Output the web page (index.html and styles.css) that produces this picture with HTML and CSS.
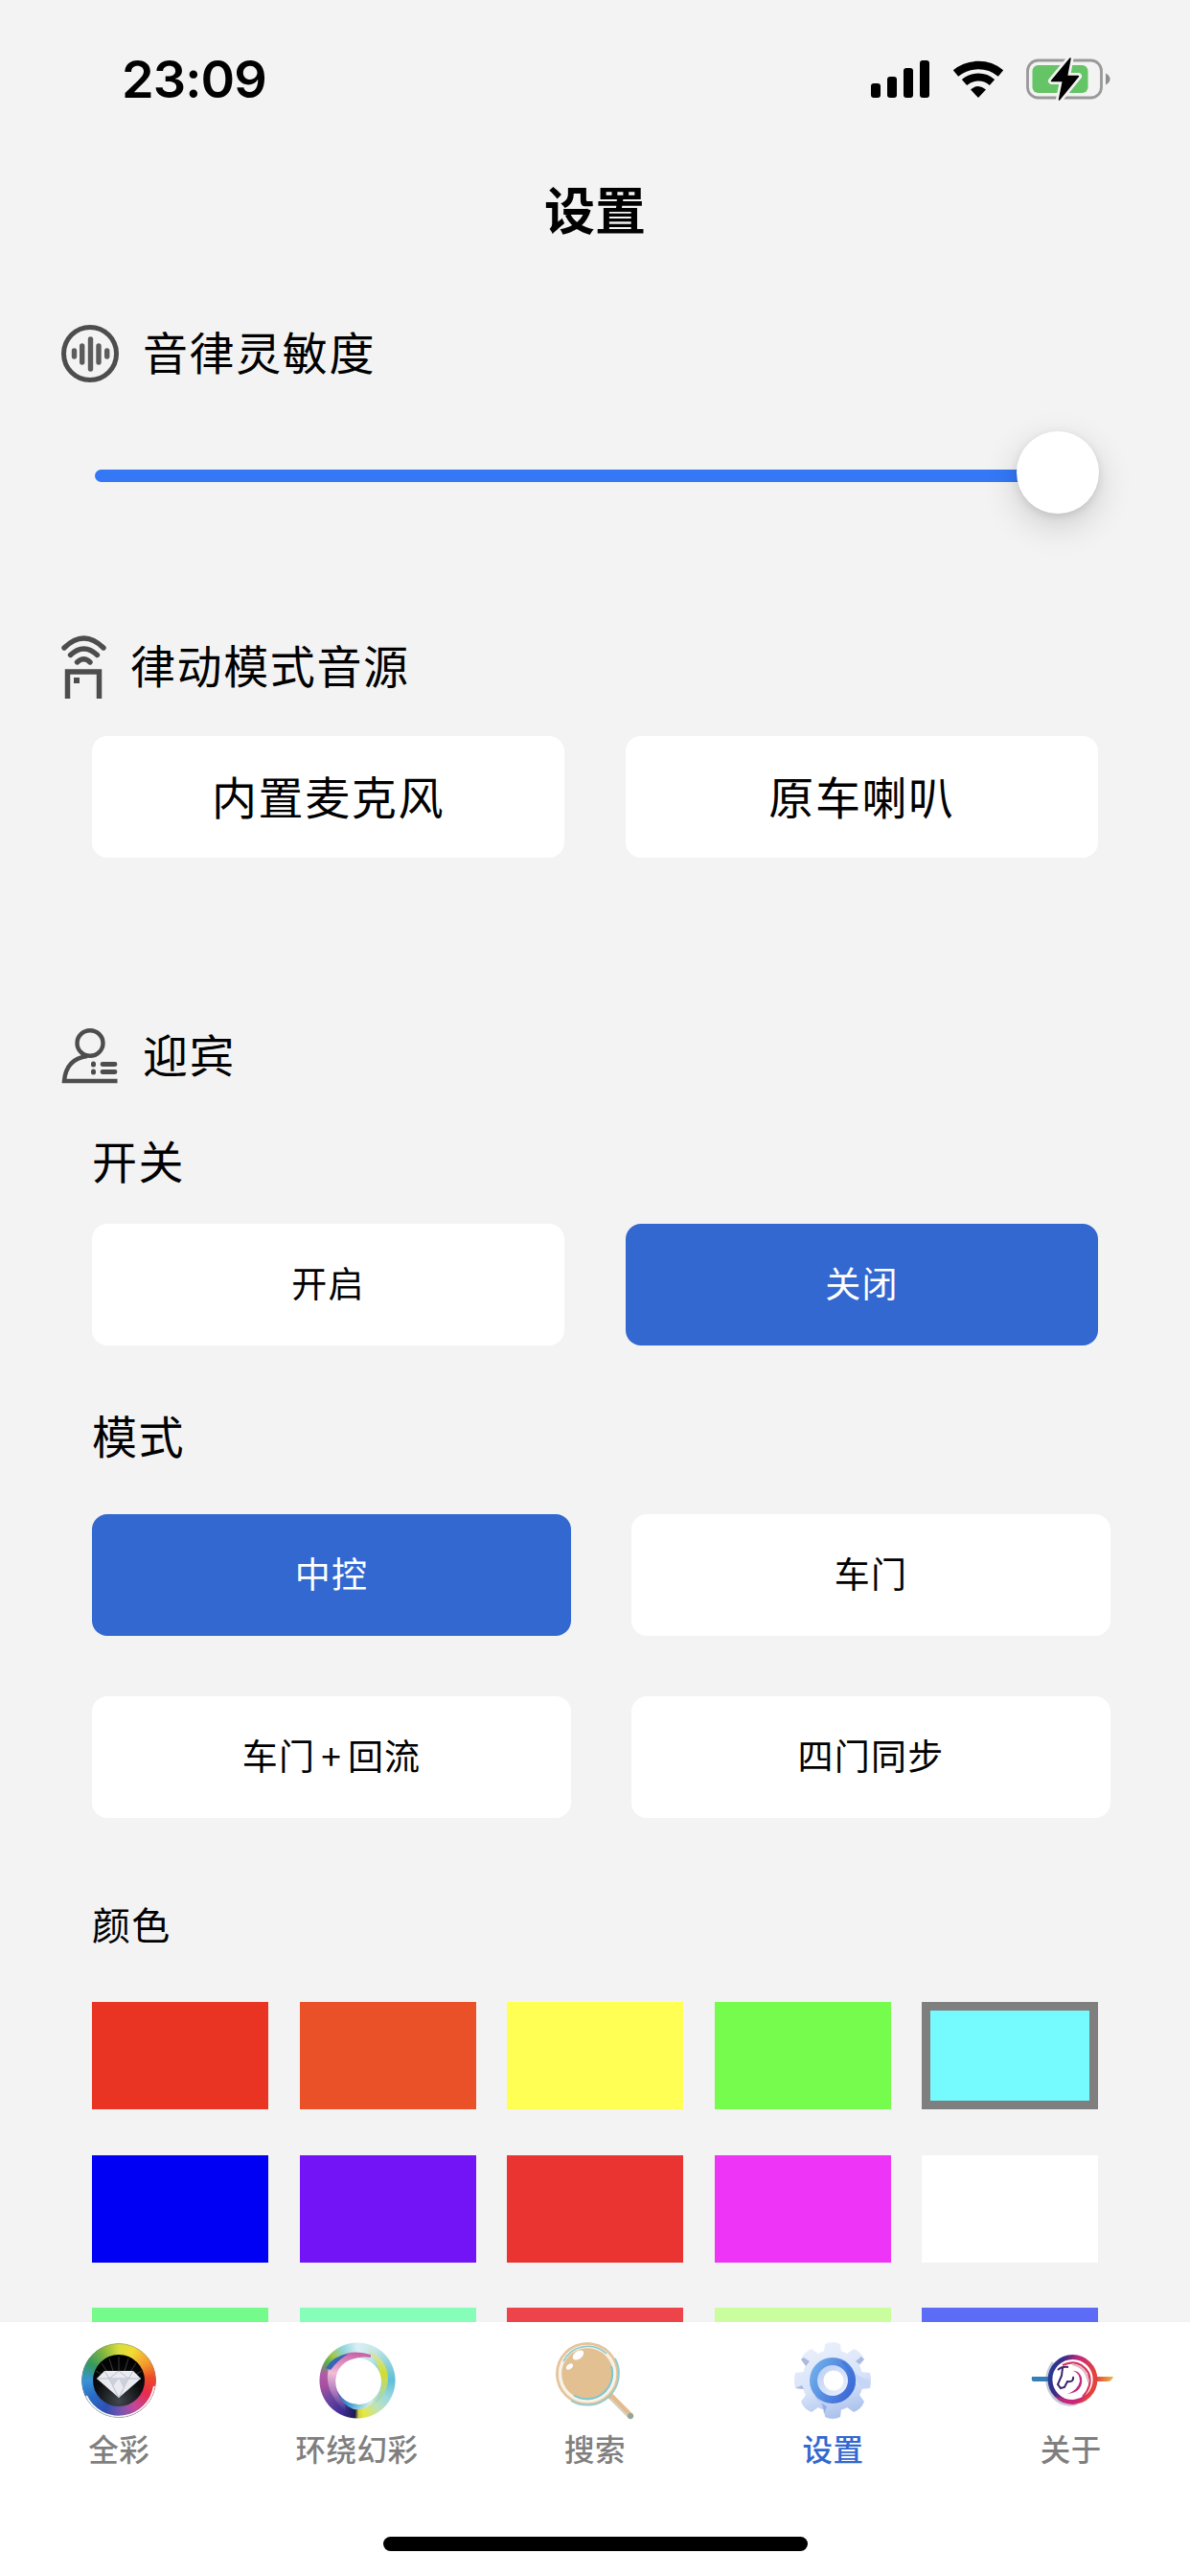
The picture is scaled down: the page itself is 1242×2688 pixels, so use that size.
FILE: index.html
```html
<!DOCTYPE html>
<html lang="zh-CN">
<head>
    <meta charset="UTF-8">
    <meta name="viewport" content="width=device-width, initial-scale=1.0">
    <title>设置</title>
    <link rel="stylesheet" href="styles.css">
</head>
<body>
    <div class="app">
        <div class="status-bar">
            <span class="time">23:09</span>
            <svg class="status-icons" width="252" height="46" viewBox="0 0 252 46">
                <!-- signal -->
                <rect x="1" y="27" width="10" height="15" rx="3"/>
                <rect x="18" y="20" width="10" height="22" rx="3"/>
                <rect x="35" y="11" width="10" height="31" rx="3"/>
                <rect x="52" y="3" width="10" height="39" rx="3"/>
                <!-- wifi -->
                <path d="M89.500 16.500A37 37 0 0 1 136.500 16.500" fill="none" stroke="#000" stroke-width="8.500"/>
                <path d="M98.500 26A22 22 0 0 1 127.500 26" fill="none" stroke="#000" stroke-width="8"/>
                <path d="M105 33.500Q113 26.500 121 33.500L113 42Z"/>
                <!-- battery -->
                <rect x="164.500" y="3" width="77" height="39" rx="11" fill="none" stroke="#999" stroke-width="2.800"/>
                <path d="M246 16.500Q250.500 19 250.500 22.500T246 28.500Z" fill="#8e8e8e"/>
                <rect x="169.500" y="8" width="58" height="29" rx="6" fill="#65c466"/>
                <path d="M209 1L189.500 24.500H201.500L197.500 44L217.500 19.500H205.500Z" stroke="#f3f3f3" stroke-width="7" stroke-linejoin="round"/>
                <path d="M209 1L189.500 24.500H201.500L197.500 44L217.500 19.500H205.500Z" stroke="#000" stroke-width="1.500" stroke-linejoin="round"/>
            </svg>
        </div>

        <h1>设置</h1>

        <main>
            <section class="sensitivity">
                <div class="section-head">
                    <svg width="60" height="60" viewBox="0 0 60 60" fill="none" stroke="#4d4d4d" stroke-linecap="round">
                        <circle cx="30" cy="30" r="27.500" stroke-width="5"/>
                        <path d="M13.500 27V33M21.700 22V39M30.500 15V46M39 22V39M47.700 27V33" stroke="#5c5c5c" stroke-width="5.400"/>
                    </svg>
                    <h2>音律灵敏度</h2>
                </div>
                <div class="slider">
                    <div class="track"></div>
                    <div class="thumb"></div>
                </div>
            </section>

            <section class="source">
                <div class="section-head">
                    <svg width="47" height="66" viewBox="0 0 47 66" fill="none" stroke="#4d4d4d">
                        <path d="M3 13Q23.500 -7 44 13" stroke-width="5.400" stroke-linecap="round"/>
                        <path d="M9.500 20.500Q23.500 7.500 37.500 20.500" stroke-width="5.400" stroke-linecap="round"/>
                        <path d="M16.500 28Q23.500 21.500 30 28" stroke-width="5.400" stroke-linecap="round"/>
                        <path d="M6.500 66V38H39.500V66" stroke-width="5.500"/>
                        <rect x="13" y="44" width="6" height="6" fill="#4d4d4d" stroke="none"/>
                    </svg>
                    <h2>律动模式音源</h2>
                </div>
                <div class="options large">
                    <button type="button">内置麦克风</button>
                    <button type="button">原车喇叭</button>
                </div>
            </section>

            <section class="welcome">
                <div class="section-head">
                    <svg width="60" height="58" viewBox="0 0 60 58" fill="none" stroke="#4d4d4d" stroke-width="4.400">
                        <ellipse cx="30" cy="15.500" rx="13.500" ry="13.300"/>
                        <path d="M27 29Q5 32 3 55H58.500"/>
                        <path d="M33.500 37V38M33.500 45V46" stroke-width="5" stroke-linecap="round"/>
                        <path d="M43 37.500H56M43 45.500H56" stroke-width="4.800" stroke-linecap="round"/>
                    </svg>
                    <h2>迎宾</h2>
                </div>

                <h3>开关</h3>
                <div class="options">
                    <button type="button">开启</button>
                    <button type="button" class="active">关闭</button>
                </div>

                <h3 class="mode-title">模式</h3>
                <div class="options modes">
                    <button type="button" class="active">中控</button>
                    <button type="button">车门<span class="plus">+</span>回流</button>
                    <button type="button">车门</button>
                    <button type="button">四门同步</button>
                </div>

                <h3 class="color-title">颜色</h3>
                <div class="colors">
                    <div class="swatch red"></div>
                    <div class="swatch orange"></div>
                    <div class="swatch yellow"></div>
                    <div class="swatch green"></div>
                    <div class="swatch cyan selected"></div>
                    <div class="swatch blue"></div>
                    <div class="swatch purple"></div>
                    <div class="swatch scarlet"></div>
                    <div class="swatch magenta"></div>
                    <div class="swatch white"></div>
                    <div class="swatch mint"></div>
                    <div class="swatch aqua"></div>
                    <div class="swatch rose"></div>
                    <div class="swatch lime"></div>
                    <div class="swatch indigo"></div>
                </div>
            </section>
        </main>

        <nav>
            <div class="tabs">
                <a class="tab">
                    <span class="icon icon-rainbow">
                        <svg width="84" height="84" viewBox="0 0 84 84">
                            <defs>
                                <radialGradient id="dark" cx=".5" cy=".9" r=".8">
                                    <stop offset="0" stop-color="#41474c"/>
                                    <stop offset=".6" stop-color="#0c0d0f"/>
                                    <stop offset="1" stop-color="#000"/>
                                </radialGradient>
                            </defs>
                            <path d="M8 58A37.500 37.500 0 0 0 79 48" fill="none" stroke="#fff" stroke-width="2"/>
                            <circle cx="42" cy="42" r="38.500" fill="none" stroke="#888" stroke-opacity=".5"/>
                            <circle cx="42" cy="42" r="27" fill="url(#dark)"/>
                            <path d="M42 32V17M36 32L32 19M48 32L52 19M30 33L24 24M54 33L60 24M26 37L18 32M58 37L66 32" stroke="#3b3b3b" stroke-width="1"/>
                            <path d="M27 32H57L65 40L42 60L19 40Z" fill="#e9ebf1"/>
                            <path d="M19 40H65M27 32L32 40L42 32L52 40L57 32M32 40L42 60L52 40" fill="none" stroke="#b9bdc9" stroke-width="1"/>
                            <path d="M32 40L36 48L42 40L47 50L52 40Z" fill="#cdd0da"/>
                        </svg>
                    </span>
                    <span>全彩</span>
                </a>
                <a class="tab">
                    <span class="icon icon-ring">
                        <svg width="84" height="84" viewBox="0 0 84 84">
                            <defs>
                                <linearGradient id="ringPink" x1=".6" y1="0" x2=".5" y2="1">
                                    <stop offset="0" stop-color="#c95fa5"/>
                                    <stop offset=".4" stop-color="#f3bbd9"/>
                                    <stop offset=".75" stop-color="#a070b8"/>
                                    <stop offset="1" stop-color="#40308f"/>
                                </linearGradient>
                                <linearGradient id="ringYellow" x1="0" y1="0" x2="0" y2="1">
                                    <stop offset="0" stop-color="#cfe8d8"/>
                                    <stop offset=".45" stop-color="#d3dc30"/>
                                    <stop offset="1" stop-color="#9dd6cf"/>
                                </linearGradient>
                                <linearGradient id="ringBlue" x1="0" y1="0" x2="1" y2=".3">
                                    <stop offset="0" stop-color="#3a56ae"/>
                                    <stop offset=".5" stop-color="#3aa0d0"/>
                                    <stop offset="1" stop-color="#d4edf2"/>
                                </linearGradient>
                            </defs>
                            <path d="M50 8Q73 18 74 40Q73 58 60 66Q70 50 66 38Q64 20 50 8Z" fill="url(#ringYellow)"/>
                            <path d="M56 15Q26 6 12 29Q6 52 29 74Q32 68 23 58Q14 42 24 29Q36 15 56 18Z" fill="url(#ringPink)"/>
                            <path d="M9 29Q17 16 33 14Q22 20 14 31Z" fill="#3566b8"/>
                            <path d="M21 54Q30 67 44 67.500L60 62Q52 74 38 72Q25 67 21 54Z" fill="url(#ringBlue)"/>
                            <circle cx="43" cy="43" r="24" fill="#fff"/>
                        </svg>
                    </span>
                    <span>环绕幻彩</span>
                </a>
                <a class="tab">
                    <span class="icon">
                        <svg width="84" height="84" viewBox="0 0 84 84" fill="none">
                            <path d="M57 57L79 79" stroke="#e6bb8c" stroke-width="6.500" stroke-linecap="round"/>
                            <path d="M58 61L76 79" stroke="#c8dcd5" stroke-width="1.500"/>
                            <circle cx="79" cy="79" r="3" fill="#8ca8a0"/>
                            <circle cx="34" cy="35" r="33" fill="#e6c39a"/>
                            <path d="M63 19A33 33 0 0 1 17 63" stroke="#8fcbd0" stroke-width="1.800"/>
                            <circle cx="34" cy="35" r="28.500" stroke="#f7f2e8" stroke-width="3.500"/>
                            <circle cx="34" cy="35" r="26.500" fill="#e2c092"/>
                            <path d="M9 22A28.500 28.500 0 0 1 54 14" stroke="#83c9cd" stroke-width="1.500"/>
                            <path d="M59 27A26.500 26.500 0 0 1 20 57.500" stroke="#79c7d1" stroke-width="2"/>
                            <ellipse cx="24.500" cy="15.500" rx="6.500" ry="4" fill="#fff" transform="rotate(-38 24.500 15.500)"/>
                            <ellipse cx="15.500" cy="27.500" rx="4" ry="2.500" fill="#fff" transform="rotate(-38 15.500 27.500)"/>
                        </svg>
                    </span>
                    <span>搜索</span>
                </a>
                <a class="tab current">
                    <span class="icon">
                        <svg width="84" height="84" viewBox="0 0 84 84">
                            <defs>
                                <linearGradient id="gear" gradientUnits="userSpaceOnUse" x1="25" y1="5" x2="50" y2="82">
                                    <stop offset="0" stop-color="#e9effb"/>
                                    <stop offset=".55" stop-color="#d8e3f9"/>
                                    <stop offset="1" stop-color="#a8bfec"/>
                                </linearGradient>
                                <linearGradient id="hub" x1="0" y1=".2" x2="1" y2=".7">
                                    <stop offset="0" stop-color="#73b2ec"/>
                                    <stop offset="1" stop-color="#3a65d5"/>
                                </linearGradient>
                                <linearGradient id="hole" x1="0" y1="0" x2="1" y2="1">
                                    <stop offset="0" stop-color="#b9cdf1"/>
                                    <stop offset="1" stop-color="#edf3ff"/>
                                </linearGradient>
                            </defs>
                            <g fill="url(#gear)">
                                <circle cx="42" cy="42" r="32"/>
                                <path d="M33 12L34 4Q42 0 50 4L51 12ZM33 72L34 80Q42 84 50 80L51 72ZM12 33L3 34Q1 42 3 50L12 51ZM72 33L81 34Q83 42 81 50L72 51Z"/>
                                <path d="M14 27L9 20Q12 12 20 9L27 14ZM57 14L64 9Q72 12 75 20L70 27ZM14 57L9 64Q12 72 20 75L27 70ZM57 70L64 75Q72 72 75 64L70 57Z"/>
                            </g>
                            <path d="M72 17L75 20L70 25L66 22ZM9 20L12 18L18 22L14 27ZM3 50L10 47L12 51Z" fill="#abb9df"/>
                            <path d="M58 25Q65 38 81 42V50L72 48Q63 42 58 25Z" fill="#c5d6f6"/>
                            <path d="M23 57Q27 64 36 69L33 77Q33 65 23 57Z" fill="#92aee8"/>
                            <circle cx="42" cy="42" r="24" fill="url(#hub)"/>
                            <path d="M55 22Q61 33 65 36Q68 46 63 54Q65 34 50 22Z" fill="#3a78d9" opacity=".6"/>
                            <circle cx="42" cy="42" r="16" fill="url(#hole)"/>
                            <circle cx="43" cy="42" r="10.500" fill="#fff"/>
                        </svg>
                    </span>
                    <span>设置</span>
                </a>
                <a class="tab">
                    <span class="icon">
                        <svg width="88" height="84" viewBox="0 0 88 84" fill="none">
                            <defs>
                                <linearGradient id="horse" x1="0" y1="0" x2="1" y2=".25">
                                    <stop offset="0" stop-color="#1f3f9c"/>
                                    <stop offset=".3" stop-color="#3d2b84"/>
                                    <stop offset=".6" stop-color="#c3287c"/>
                                    <stop offset="1" stop-color="#e3433c"/>
                                </linearGradient>
                                <linearGradient id="wingR" x1="0" x2="1" y1="0" y2="0">
                                    <stop offset="0" stop-color="#df3e3e"/>
                                    <stop offset="1" stop-color="#f0b83e"/>
                                </linearGradient>
                            </defs>
                            <path d="M25 23Q12 42 26 60Q36 70 50 66" stroke="#c7c8d8" stroke-width="3"/>
                            <path d="M3 38H22V43H5Q2 43 3 38Z" fill="#347fb8"/>
                            <path d="M69 38H88Q86 43 82 43H69Z" fill="url(#wingR)"/>
                            <circle cx="45.500" cy="41" r="23.500" stroke="url(#horse)" stroke-width="4.800"/>
                            <path d="M27 58Q45 76 64 54Q46 68 27 58Z" fill="#cc267c"/>
                            <path d="M35 26Q52 18 62 34Q67 47 56 59" stroke="#d9375c" stroke-width="2.200"/>
                            <path d="M45 25Q60 28 62 44" stroke="#dfb3c8" stroke-width="2"/>
                            <path d="M30 31Q34 27 41 28" stroke="#4a2670" stroke-width="2"/>
                            <path d="M35 29L34 37L30 46L33 50L37 49L40 43Q47 44 46 38" stroke="#38246b" stroke-width="2"/>
                            <path d="M46 32Q53 34 53 43Q51 52 40 56Q57 54 55 39Q52 31 46 32Z" fill="#bd2c7d"/>
                        </svg>
                    </span>
                    <span>关于</span>
                </a>
            </div>
            <div class="home-indicator"></div>
        </nav>
    </div>
</body>
</html>
```

FILE: styles.css
```css
* {
    box-sizing: border-box;
}
body {
    margin: 0;
    font-family: "Noto Sans CJK SC", sans-serif;
    background-color: #f3f3f3;
    color: #000;
}
h1, h2, h3 {
    margin: 0;
    font-weight: normal;
}
.app {
    width: 1242px;
    height: 2688px;
    display: flex;
    flex-direction: column;
    overflow: hidden;
}
.status-bar {
    flex: none;
    height: 162px;
    padding: 60px 82px 0 127px;
    display: flex;
    justify-content: space-between;
    align-items: flex-start;
}
.time {
    font-family: Inter, sans-serif;
    font-size: 54px;
    font-weight: 600;
    line-height: 46px;
    letter-spacing: -0.9px;
}
h1 {
    flex: none;
    height: 110px;
    line-height: 110px;
    text-align: center;
    font-size: 53px;
    font-weight: bold;
}
main {
    flex: 1;
    min-height: 0;
    overflow: hidden;
    padding: 67px 83px 0 64px;
}

/* section headings */
.section-head {
    display: flex;
    align-items: center;
    gap: 25px;
    height: 60px;
}
.section-head h2 {
    padding-bottom: 6px;
}
h2, h3 {
    font-size: 47px;
    line-height: 60px;
    letter-spacing: 1.6px;
}
.source .section-head {
    height: 66px;
}

/* slider */
.slider {
    position: relative;
    height: 86px;
    margin: 51px 0 127px 35px;
    padding-top: 40px;
}
.track {
    height: 13px;
    margin-right: 40px;
    border-radius: 7px;
    background-color: #3478f6;
}
.thumb {
    position: absolute;
    top: 0;
    right: 12px;
    width: 86px;
    height: 86px;
    border-radius: 50%;
    background-color: #fff;
    box-shadow: 0 12px 36px rgba(0, 0, 0, 0.16), 0 3px 10px rgba(0, 0, 0, 0.1);
}

/* option buttons */
.options {
    display: grid;
    grid-template-columns: 493px 493px;
    gap: 63px 64px;
    margin-left: 32px;
}
.options button {
    height: 127px;
    padding: 0 0 5px;
    border: none;
    border-radius: 16px;
    background-color: #fff;
    color: #000;
    font-family: inherit;
    font-size: 37px;
    letter-spacing: 1.2px;
}
.options .active {
    background-color: #3268d0;
    color: #fff;
}
.plus {
    padding: 0 6px;
}
.large {
    margin-top: 39px;
}
.options.large button {
    font-size: 47px;
    letter-spacing: 1.6px;
}
.modes {
    grid-template-columns: 500px 500px;
    grid-template-rows: 127px 127px;
    grid-auto-flow: column;
    gap: 63px;
}

.welcome {
    margin-top: 177px;
}
.welcome h3 {
    margin: 48px 0 37px 32px;
}
.welcome .mode-title {
    margin: 63px 0 53px 32px;
}
.welcome .color-title {
    margin: 80px 0 52px 32px;
    font-size: 40px;
    letter-spacing: 1.2px;
}

/* colors */
.colors {
    display: grid;
    grid-template-columns: repeat(5, 184px);
    grid-auto-rows: 112px;
    gap: 47.5px 32.5px;
    margin-left: 32px;
}
.red { background-color: #e93323; }
.orange { background-color: #eb5128; }
.yellow { background-color: #ffff54; }
.green { background-color: #75fc4c; }
.cyan { background-color: #75fbfd; }
.blue { background-color: #0000f5; }
.purple { background-color: #7214f5; }
.scarlet { background-color: #ea3432; }
.magenta { background-color: #ed34f7; }
.white { background-color: #fff; }
.mint { background-color: #75fb8c; }
.aqua { background-color: #86fdb8; }
.rose { background-color: #ec444a; }
.lime { background-color: #cafd9d; }
.indigo { background-color: #5c6cf6; }
.swatch.selected {
    border: 9px solid #7f7f7f;
}

/* bottom tabs */
nav {
    flex: none;
    height: 265px;
    padding-top: 19px;
    background-color: #fff;
}
.tabs {
    display: flex;
}
.tab {
    flex: 1;
    display: flex;
    flex-direction: column;
    align-items: center;
    color: #7f7f7f;
    font-size: 31.5px;
    font-weight: 500;
    line-height: 40px;
    letter-spacing: 0.5px;
}
.tab.current {
    color: #3268d0;
}
.icon {
    height: 84px;
    margin-bottom: 8px;
}
.icon svg {
    display: block;
}
.icon-rainbow {
    width: 84px;
    background: radial-gradient(circle, transparent 38.5px, #fff 39px), conic-gradient(#d9de3c 0deg, #f0dc34 25deg, #f4962c 60deg, #ee4a25 85deg, #e82a4f 115deg, #c04a9c 150deg, #7b55ad 175deg, #2d50b4 205deg, #2b6cc6 240deg, #3a93d8 270deg, #35985e 300deg, #7fb542 330deg, #d9de3c 360deg);
}
.icon-ring {
    width: 84px;
    background: radial-gradient(circle, transparent 39px, #fff 40px), conic-gradient(#d9eff5 0deg, #c5e6e6 30deg, #8fd3d8 60deg, #5dbfd9 90deg, #9ed9dc 120deg, #bfe3b5 145deg, #e6e83c 170deg, #d0d040 178deg, #1d1a4a 184deg, #3b2c96 205deg, #6a45a0 235deg, #a4509f 260deg, #b05aa8 280deg, #5da850 300deg, #9fc84a 315deg, #8fd5dc 335deg, #d9eff5 360deg);
}
.home-indicator {
    width: 443px;
    height: 15px;
    margin: 73px auto 0;
    border-radius: 8px;
    background-color: #000;
}
```
